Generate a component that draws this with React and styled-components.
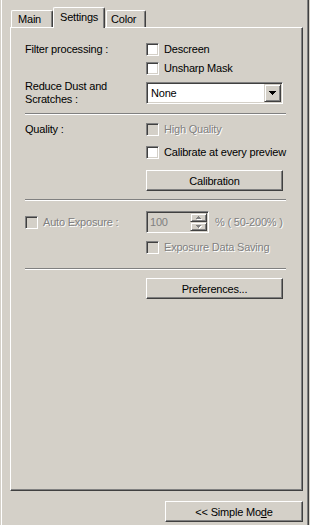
import React from 'react'
import styled, { createGlobalStyle } from 'styled-components'

const FACE = '#d4d0c8'
const SHADOW = '#808080'
const DARK = '#404040'
const LIGHT = '#ffffff'

const GlobalStyle = createGlobalStyle`
  html, body {
    margin: 0;
    padding: 0;
    background: ${FACE};
  }
  body {
    font-family: 'Liberation Sans', Arial, sans-serif;
    font-size: 11px;
    letter-spacing: -0.2px;
    color: #000;
  }
  * {
    box-sizing: border-box;
  }
`

const Arrow = ({ color = '#000', shadow }) => (
  <svg width='8' height='5' viewBox='0 0 8 5' shapeRendering='crispEdges'>
    {shadow && (
      <g fill={LIGHT}>
        <rect x='1' y='1' width='7' height='1' />
        <rect x='2' y='2' width='5' height='1' />
        <rect x='3' y='3' width='3' height='1' />
        <rect x='4' y='4' width='1' height='1' />
      </g>
    )}
    <g fill={color}>
      <rect x='0' y='0' width='7' height='1' />
      <rect x='1' y='1' width='5' height='1' />
      <rect x='2' y='2' width='3' height='1' />
      <rect x='3' y='3' width='1' height='1' />
    </g>
  </svg>
)

const TinyArrow = ({ up }) => (
  <svg width='6' height='4' viewBox='0 0 6 4' shapeRendering='crispEdges'>
    <g fill={LIGHT}>
      {up ? (
        <>
          <rect x='3' y='1' width='1' height='1' />
          <rect x='2' y='2' width='3' height='1' />
          <rect x='1' y='3' width='5' height='1' />
        </>
      ) : (
        <>
          <rect x='1' y='1' width='5' height='1' />
          <rect x='2' y='2' width='3' height='1' />
          <rect x='3' y='3' width='1' height='1' />
        </>
      )}
    </g>
    <g fill={SHADOW}>
      {up ? (
        <>
          <rect x='2' y='0' width='1' height='1' />
          <rect x='1' y='1' width='3' height='1' />
          <rect x='0' y='2' width='5' height='1' />
        </>
      ) : (
        <>
          <rect x='0' y='0' width='5' height='1' />
          <rect x='1' y='1' width='3' height='1' />
          <rect x='2' y='2' width='1' height='1' />
        </>
      )}
    </g>
  </svg>
)

const CheckItem = ({ label, disabled }) => (
  <CheckLine>
    <Box $disabled={disabled} />
    <Text $disabled={disabled}>{label}</Text>
  </CheckLine>
)

const App = () => {
  return (
    <Window>
      <GlobalStyle />
      <Frame>
        <TabBar>
          <Tab $w={42} $pad={6}>Main</Tab>
          <Tab $w={52} $pad={6} $active>Settings</Tab>
          <Tab $w={40} $pad={4} $gap={1}>Color</Tab>
        </TabBar>
        <Panel>
          <Field>
            <Text>Filter processing :</Text>
            <CheckItem label='Descreen' />
          </Field>
          <Field $mt={6}>
            <span />
            <CheckItem label='Unsharp Mask' />
          </Field>
          <Field $mt={5}>
            <Text>Reduce Dust and<br />Scratches :</Text>
            <Select>
              <SelectText>None</SelectText>
              <DropButton>
                <Arrow />
              </DropButton>
            </Select>
          </Field>
          <Separator $mt={7} />

          <Field $mt={8}>
            <Text>Quality :</Text>
            <CheckItem label='High Quality' disabled />
          </Field>
          <Field $mt={10}>
            <span />
            <CheckItem label='Calibrate at every preview' />
          </Field>
          <Field $mt={11}>
            <span />
            <Button>Calibration</Button>
          </Field>
          <Separator $mt={8} />

          <Field $mt={10}>
            <CheckItem label='Auto Exposure :' disabled />
            <SpinRow>
              <SpinBox>
                <SpinText>100</SpinText>
                <SpinButtons>
                  <SpinButton>
                    <TinyArrow up />
                  </SpinButton>
                  <SpinButton>
                    <TinyArrow />
                  </SpinButton>
                </SpinButtons>
              </SpinBox>
              <Text $disabled>% ( 50-200% )</Text>
            </SpinRow>
          </Field>
          <Field $mt={8}>
            <span />
            <CheckItem label='Exposure Data Saving' disabled />
          </Field>
          <Separator $mt={14} />

          <Field $mt={8}>
            <span />
            <Button>Preferences...</Button>
          </Field>
        </Panel>
        <Footer>
          <Button $w={138}>
            {'<< Simple Mo'}<u>d</u>e
          </Button>
        </Footer>
      </Frame>
    </Window>
  )
}

const Window = styled.div`
  width: 310px;
  height: 525px;
  padding-left: 1px;
  overflow: hidden;
  background: ${FACE};
`
const Frame = styled.div`
  width: 308px;
  height: 100%;
  border-left: 1px solid ${LIGHT};
  border-right: 1px solid ${DARK};
  box-shadow: inset -1px 0 ${SHADOW};
  padding: 0 5px 0 8px;
  display: flex;
  flex-direction: column;
`
const TabBar = styled.div`
  height: 27px;
  padding-left: 1px;
  display: flex;
  align-items: flex-end;
`
const Tab = styled.div`
  position: relative;
  z-index: ${p => (p.$active ? 1 : 0)};
  width: ${p => p.$w}px;
  height: ${p => (p.$active ? 21 : 17)}px;
  margin-left: ${p => p.$gap || 0}px;
  margin-bottom: ${p => (p.$active ? -1 : 0)}px;
  padding: ${p => (p.$active ? 3 : 2)}px 0 0 ${p => p.$pad}px;
  line-height: 13px;
  white-space: nowrap;
  background: ${FACE};
  border-top: 1px solid ${LIGHT};
  border-left: 1px solid ${LIGHT};
  border-right: 1px solid ${DARK};
  border-radius: 2px 2px 0 0;
  box-shadow: inset -1px 0 ${SHADOW};
`
const Panel = styled.div`
  height: 464px;
  border: 1px solid;
  border-color: ${LIGHT} ${DARK} ${DARK} ${LIGHT};
  box-shadow: inset -1px -1px ${SHADOW};
  padding: 15px 16px 0 14px;
  display: flex;
  flex-direction: column;
`
const Field = styled.div`
  display: grid;
  grid-template-columns: 121px 137px;
  align-items: center;
  margin-top: ${p => p.$mt || 0}px;
`
const Text = styled.span`
  line-height: 13px;
  white-space: nowrap;
  color: ${p => (p.$disabled ? SHADOW : '#000')};
  text-shadow: ${p => (p.$disabled ? `1px 1px 0 ${LIGHT}` : 'none')};
`
const CheckLine = styled.div`
  display: flex;
  align-items: center;
  gap: 5px;
  height: 13px;
`
const Box = styled.span`
  flex: 0 0 13px;
  width: 13px;
  height: 13px;
  border: 1px solid;
  border-color: ${SHADOW} ${LIGHT} ${LIGHT} ${SHADOW};
  box-shadow: inset 1px 1px ${DARK}, inset -1px -1px ${FACE};
  background: ${p => (p.$disabled ? FACE : LIGHT)};
`
const Separator = styled.div`
  height: 2px;
  border-top: 1px solid ${SHADOW};
  border-bottom: 1px solid ${LIGHT};
  margin-top: ${p => p.$mt}px;
`
const Sunken = styled.div`
  height: 22px;
  border: 1px solid;
  border-color: ${SHADOW} ${LIGHT} ${LIGHT} ${SHADOW};
  box-shadow: inset 1px 1px ${DARK}, inset -1px -1px ${FACE};
  padding: 1px;
  display: flex;
`
const Select = styled(Sunken)`
  width: 137px;
  background: ${LIGHT};
`
const SelectText = styled.span`
  flex: 1;
  padding-left: 3px;
  line-height: 18px;
`
const Raised = styled.div`
  border: 1px solid;
  border-color: ${FACE} ${DARK} ${DARK} ${FACE};
  box-shadow: inset 1px 1px ${LIGHT}, inset -1px -1px ${SHADOW};
  background: ${FACE};
  display: flex;
  align-items: center;
  justify-content: center;
`
const DropButton = styled(Raised)`
  width: 17px;
  padding-top: 1px;
`
const SpinRow = styled.div`
  display: flex;
  align-items: center;
  gap: 6px;
`
const SpinBox = styled(Sunken)`
  width: 63px;
  background: ${FACE};
`
const SpinText = styled.span`
  flex: 1;
  padding-left: 2px;
  line-height: 18px;
  color: ${SHADOW};
`
const SpinButtons = styled.div`
  width: 17px;
  display: flex;
  flex-direction: column;
`
const SpinButton = styled(Raised)`
  flex: 1;
`
const Button = styled.div`
  width: ${p => p.$w || 137}px;
  height: 21px;
  border: 1px solid;
  border-color: ${LIGHT} ${DARK} ${DARK} ${LIGHT};
  box-shadow: inset -1px -1px ${SHADOW};
  background: ${FACE};
  display: flex;
  align-items: center;
  justify-content: center;
  white-space: nowrap;
`
const Footer = styled.div`
  margin-top: 10px;
  display: flex;
  justify-content: flex-end;
`

export default App
